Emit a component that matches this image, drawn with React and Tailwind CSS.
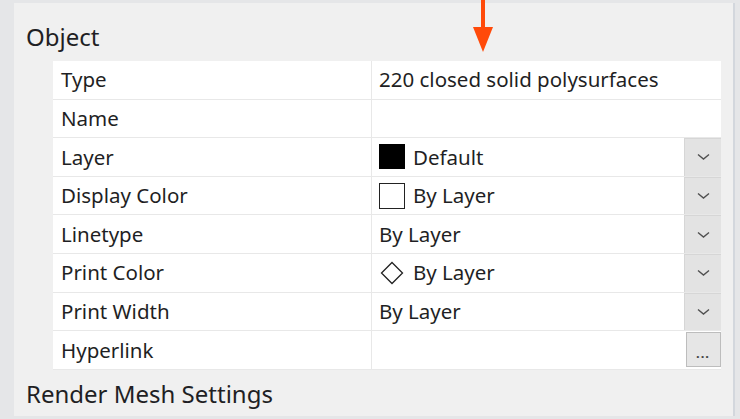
import React from 'react';

const rows = [
  { label: 'Type', value: '220 closed solid polysurfaces' },
  { label: 'Name', value: '' },
  { label: 'Layer', value: 'Default', swatch: 'black', drop: true },
  { label: 'Display Color', value: 'By Layer', swatch: 'white', drop: true },
  { label: 'Linetype', value: 'By Layer', drop: true },
  { label: 'Print Color', value: 'By Layer', swatch: 'diamond', drop: true },
  { label: 'Print Width', value: 'By Layer', drop: true },
  { label: 'Hyperlink', value: '', more: true },
];

const Swatch = ({ kind }) => {
  if (kind === 'black') return <span className="w-[26px] h-[25px] bg-black mr-[8px] shrink-0" />;
  if (kind === 'white') return <span className="w-[26px] h-[26px] bg-white border-[1.5px] border-[#222] mr-[8px] shrink-0" />;
  return (
    <svg width="26" height="24" viewBox="0 0 26 24" className="mr-[8px] shrink-0">
      <path d="M13 1.5 L23.5 12 L13 22.5 L2.5 12 Z" fill="white" stroke="#222" strokeWidth="1.3" />
    </svg>
  );
};

const Chevron = () => (
  <svg width="13" height="8" viewBox="0 0 13 8">
    <path d="M1 1.5 L6.5 6 L12 1.5" fill="none" stroke="#505050" strokeWidth="1.4" />
  </svg>
);

export default function App() {
  return (
    <div
      className="relative w-[740px] h-[419px] overflow-hidden bg-[#e5e6e8] text-[#1f1f24]"
      style={{ fontFamily: '"Noto Sans", "Open Sans", sans-serif' }}
    >
      <div className="ml-[14px] mt-[3px] w-[721px] h-[413px] bg-[#f0f0f0] border-r-2 border-[#d3d7dd] flex flex-col">
        {/* section header */}
        <div className="h-[58px] pl-[12px] pt-[18px] text-[24px] leading-[32px]">Object</div>

        {/* property grid */}
        <div className="pl-[39px] pr-[12px]">
          {rows.map((r) => (
            <div key={r.label} className="flex h-[38.6px] border-b border-[#e8e8e8] bg-white text-[20.5px]">
              <div className="w-[319px] shrink-0 border-r border-[#e8e8e8] pl-[8px] flex items-center">{r.label}</div>
              <div className="flex-1 flex items-center pl-[7px]">
                {r.swatch && <Swatch kind={r.swatch} />}
                <span>{r.value}</span>
              </div>
              {r.drop && (
                <div className="w-[37px] shrink-0 bg-[#e3e3e3] border-l border-t border-[#d6d6d6] flex items-center justify-center">
                  <Chevron />
                </div>
              )}
              {r.more && (
                <div className="w-[36px] shrink-0 flex items-center justify-center">
                  <div className="w-[35px] h-[35px] bg-[#e6e6e6] border border-[#bdbdbd] flex items-end justify-center pb-[6px] text-[13px] leading-none text-[#444] font-bold tracking-[1px]">
                    ...
                  </div>
                </div>
              )}
            </div>
          ))}
        </div>

        <div className="pl-[12px] pt-[8px] text-[24px] leading-[32px]">Render Mesh Settings</div>
      </div>

      {/* pointer arrow */}
      <svg className="absolute left-[473px] top-0" width="20" height="53" viewBox="0 0 20 53">
        <rect x="8" y="0" width="4" height="29" fill="#ff4a0a" />
        <path d="M0 27 L20 27 L10 52 Z" fill="#ff4a0a" />
      </svg>
    </div>
  );
}
